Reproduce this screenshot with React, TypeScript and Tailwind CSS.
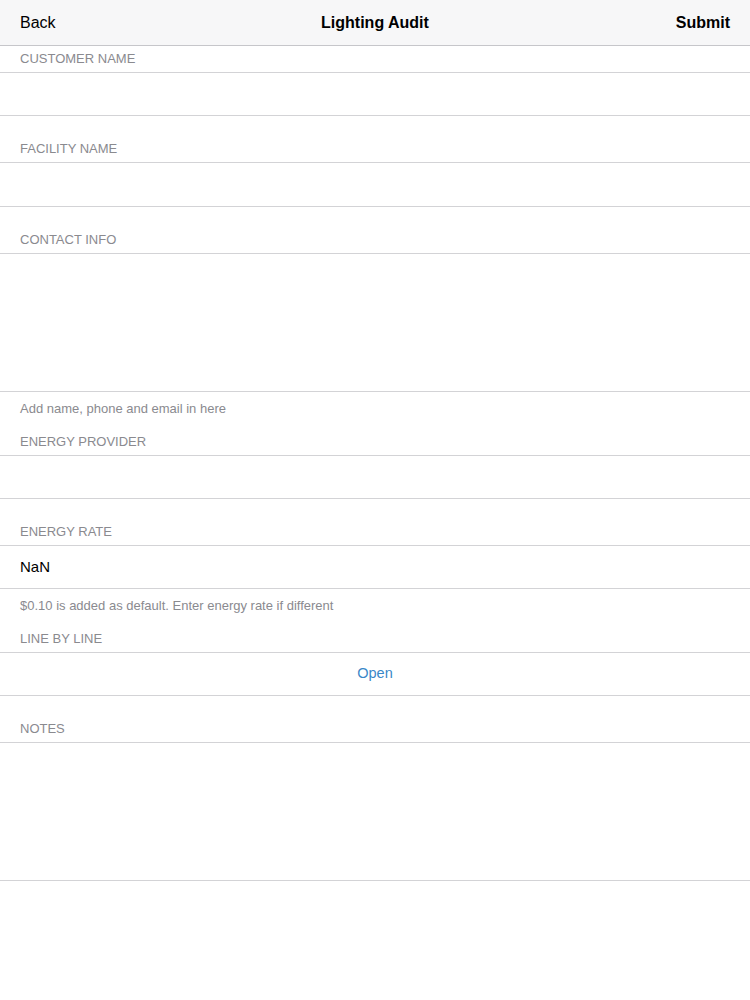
import React from "react";

const font = { fontFamily: '"Liberation Sans", Arial, sans-serif' };

function Label({ text, first }: { text: string; first?: boolean }) {
  return (
    <div
      className={`flex items-end px-5 pb-[5px] ${first ? "h-[26px]" : "h-[46px]"}`}
    >
      <span className="text-[13px] leading-[16px] text-[#8a8a8f] uppercase">{text}</span>
    </div>
  );
}

function Cell({ h, children }: { h: string; children?: React.ReactNode }) {
  return (
    <div className={`border-y border-[#d3d3d6] bg-white ${h} flex items-center px-5`}>{children}</div>
  );
}

function Footer({ text }: { text: string }) {
  return (
    <div className="px-5 pt-[9px] h-[26px] text-[13px] leading-[16px] text-[#8a8a8f]">{text}</div>
  );
}

export default function App() {
  return (
    <div style={font} className="w-[750px] h-[1000px] bg-white overflow-hidden">
      <div className="h-[46px] bg-[#f7f7f8] border-b border-[#c6c6ca] grid grid-cols-3 items-center px-5">
        <span className="text-[16px] text-black">Back</span>
        <span className="text-[16px] font-bold text-black text-center">Lighting Audit</span>
        <span className="text-[16px] font-bold text-black text-right">Submit</span>
      </div>

      <Label text="Customer Name" first />
      <Cell h="h-[44px]" />

      <Label text="Facility Name" />
      <Cell h="h-[45px]" />

      <Label text="Contact Info" />
      <Cell h="h-[139px]" />
      <Footer text="Add name, phone and email in here" />
      <div className="flex items-end px-5 pb-[5px] h-[37px]">
        <span className="text-[13px] leading-[16px] text-[#8a8a8f]">ENERGY PROVIDER</span>
      </div>
      <Cell h="h-[44px]" />

      <Label text="Energy Rate" />
      <Cell h="h-[44px]">
        <span className="text-[15px] text-black">NaN</span>
      </Cell>
      <Footer text="$0.10 is added as default. Enter energy rate if different" />
      <div className="flex items-end px-5 pb-[5px] h-[37px]">
        <span className="text-[13px] leading-[16px] text-[#8a8a8f]">LINE BY LINE</span>
      </div>
      <div className="border-y border-[#d3d3d6] h-[44px] flex items-center justify-center">
        <span className="text-[14.5px] text-[#3a87c8]">Open</span>
      </div>

      <Label text="Notes" />
      <Cell h="h-[139px]" />
    </div>
  );
}
